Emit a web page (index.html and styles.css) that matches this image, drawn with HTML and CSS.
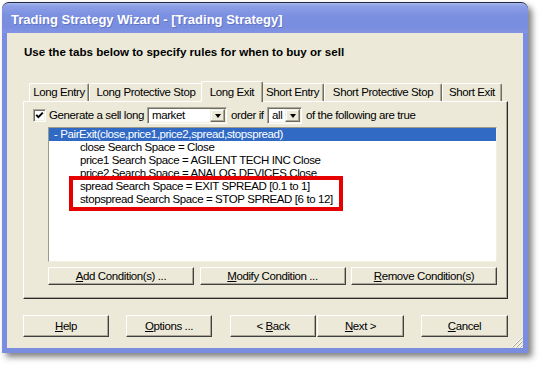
FILE: index.html
```html
<!DOCTYPE html>
<html>
<head>
<meta charset="utf-8">
<title>Trading Strategy Wizard</title>
<link rel="stylesheet" href="styles.css">
</head>
<body>
<div class="window">
  <div class="titlebar">Trading Strategy Wizard - [Trading Strategy]</div>
  <div class="client">
    <div class="intro">Use the tabs below to specify rules for when to buy or sell</div>
    <div class="tabstrip">
      <div class="tab w1">Long Entry</div>
      <div class="tab w2">Long Protective Stop</div>
      <div class="tab w3 active">Long Exit</div>
      <div class="tab w4">Short Entry</div>
      <div class="tab w5">Short Protective Stop</div>
      <div class="tab w6">Short Exit</div>
    </div>
    <div class="panel">
      <div class="rule">
        <span class="check"><svg width="9" height="9" viewBox="0 0 9 9"><polyline points="1.2,3.8 3.4,6.1 7.8,1.6" fill="none" stroke="#000" stroke-width="1.9"/></svg></span>
        <span class="lbl l1">Generate a sell long</span>
        <span class="combo c-market"><span class="val">market</span><span class="arrow"><span class="tri"></span></span></span>
        <span class="lbl l2">order if</span>
        <span class="combo c-all"><span class="val">all</span><span class="arrow"><span class="tri"></span></span></span>
        <span class="lbl l3">of the following are true</span>
      </div>
      <div class="list">
        <div class="row sel">- PairExit(close,price1,price2,spread,stopspread)</div>
        <div class="row child">close Search Space = Close</div>
        <div class="row child">price1 Search Space = AGILENT TECH INC Close</div>
        <div class="row child">price2 Search Space = ANALOG DEVICES Close</div>
        <div class="row child">spread Search Space = EXIT SPREAD [0.1 to 1]</div>
        <div class="row child">stopspread Search Space = STOP SPREAD [6 to 12]</div>
        <div class="mark"></div>
      </div>
      <div class="pbuttons">
        <div class="btn pb"><u>A</u>dd Condition(s) ...</div>
        <div class="btn pb"><u>M</u>odify Condition ...</div>
        <div class="btn pb"><u>R</u>emove Condition(s)</div>
      </div>
    </div>
    <div class="footer">
      <div class="btn fb b-help"><u>H</u>elp</div>
      <div class="btn fb b-opt"><u>O</u>ptions ...</div>
      <div class="btn fb b-back">&lt; <u>B</u>ack</div>
      <div class="btn fb b-next"><u>N</u>ext &gt;</div>
      <div class="btn fb b-cancel"><u>C</u>ancel</div>
    </div>
    <div class="grip"><svg width="12" height="12" viewBox="0 0 12 12">
      <g stroke-width="1">
        <line x1="11.5" y1="0.5" x2="0.5" y2="11.5" stroke="#fff"/>
        <line x1="11.5" y1="1.5" x2="1.5" y2="11.5" stroke="#ACA899"/>
        <line x1="11.5" y1="4.5" x2="4.5" y2="11.5" stroke="#fff"/>
        <line x1="11.5" y1="5.5" x2="5.5" y2="11.5" stroke="#ACA899"/>
        <line x1="11.5" y1="8.5" x2="8.5" y2="11.5" stroke="#fff"/>
        <line x1="11.5" y1="9.5" x2="9.5" y2="11.5" stroke="#ACA899"/>
      </g></svg></div>
  </div>
</div>
</body>
</html>
```
FILE: styles.css
```css
html, body {
  margin: 0;
  padding: 0;
  background: #fff;
}
body {
  width: 542px;
  height: 367px;
  overflow: hidden;
  font-family: "Liberation Sans", Arial, sans-serif;
  font-size: 11.5px;
  letter-spacing: -0.4px;
  color: #000;
}
.window {
  margin: 2px 0 0 2px;
  width: 526px;
  height: 351px;
  box-sizing: border-box;
  display: flex;
  flex-direction: column;
  background: #7A8DDE;
  border-top: 1px solid #23283c;
  border-radius: 7px 7px 0 0;
  box-shadow: 4px 4px 6px rgba(0, 0, 0, 0.5);
}
.titlebar {
  height: 30px;
  box-sizing: border-box;
  padding: 3px 0 0 9px;
  line-height: 27px;
  border-radius: 7px 7px 0 0;
  background: linear-gradient(to bottom, #A9B8EF 0, #8D9FE6 3px, #7C90E1 12px, #798DE0 24px, #8294E2 30px);
  color: #fff;
  font-weight: bold;
  font-size: 13px;
  letter-spacing: 0;
  text-shadow: 1px 1px 0 rgba(50, 60, 140, 0.35);
  white-space: nowrap;
}
.client {
  position: relative;
  flex: 1;
  margin: 0 5px 5px 5px;
  background: #ECE9D8;
  padding: 0 15px 0 16px;
  display: flex;
  flex-direction: column;
}
.intro {
  margin: 12px 0 0 1px;
  font-weight: bold;
  font-size: 11.6px;
  letter-spacing: 0;
  line-height: 14px;
  white-space: nowrap;
}
.tabstrip {
  margin-top: 22px;
  height: 20px;
  display: flex;
  align-items: flex-end;
  padding-left: 6px;
  position: relative;
  z-index: 2;
}
.tab {
  height: 18px;
  box-sizing: border-box;
  border-top: 1px solid #fff;
  border-left: 1px solid #fff;
  border-right: 1px solid #716F64;
  box-shadow: inset -1px 0 0 #ACA899;
  border-radius: 2px 2px 0 0;
  line-height: 16px;
  text-align: center;
  white-space: nowrap;
  background: #ECE9D8;
}
.w1 { width: 60px; }
.w2 { width: 114px; border-right-color: transparent; box-shadow: none; }
.w3 { width: 58px; }
.w4 { width: 63px; }
.w5 { width: 118px; }
.w6 { width: 60px; }
.tab.active {
  height: 21px;
  margin: 0 -2px -1px -2px;
  width: 62px;
  padding-top: 2px;
  position: relative;
  z-index: 3;
}
.panel {
  height: 198px;
  box-sizing: border-box;
  border: 1px solid;
  border-color: #fff #2a2a2a #2a2a2a #fff;
  box-shadow: inset -1px -1px 0 #ACA899;
  padding-top: 5px;
  display: flex;
  flex-direction: column;
}
.rule {
  display: flex;
  align-items: center;
  height: 17px;
  white-space: nowrap;
}
.check {
  width: 13px;
  height: 13px;
  box-sizing: border-box;
  margin-left: 9px;
  background: #fff;
  border: 1px solid;
  border-color: #ACA899 #fff #fff #ACA899;
  box-shadow: inset 1px 1px 0 #716F64, inset -1px -1px 0 #F1EFE2;
  display: flex;
  align-items: center;
  justify-content: center;
}
.check svg { display: block; }
.lbl { display: block; line-height: 17px; }
.l1 { width: 101px; padding-left: 3px; box-sizing: border-box; }
.l2 { width: 40px; padding-left: 4px; box-sizing: border-box; }
.l3 { padding-left: 4px; }
.combo {
  height: 17px;
  box-sizing: border-box;
  display: flex;
  background: #fff;
  border: 1px solid;
  border-color: #ACA899 #fff #fff #ACA899;
  box-shadow: inset 1px 1px 0 #716F64, inset -1px -1px 0 #F1EFE2;
  padding: 1px 1px 1px 1px;
}
.c-market { width: 80px; }
.c-all { width: 35px; }
.val {
  flex: 1;
  line-height: 13px;
  padding-left: 3px;
}
.arrow {
  width: 15px;
  height: 13px;
  box-sizing: border-box;
  background: #ECE9D8;
  border: 1px solid;
  border-color: #F1EFE2 #716F64 #716F64 #F1EFE2;
  box-shadow: inset -1px -1px 0 #ACA899, inset 1px 1px 0 #fff;
  display: flex;
  align-items: center;
  justify-content: center;
}
.tri {
  width: 0;
  height: 0;
  border-left: 3.5px solid transparent;
  border-right: 3.5px solid transparent;
  border-top: 4px solid #000;
}
.list {
  position: relative;
  margin: 3px 0 0 24px;
  width: 449px;
  height: 135px;
  box-sizing: border-box;
  background: #fff;
  border: 1px solid;
  border-color: #9D9A8C #F1EFE2 #F1EFE2 #9D9A8C;
  white-space: nowrap;
}
.row {
  height: 13px;
  line-height: 13px;
}
.row.sel {
  background: #316AC5;
  color: #fff;
  padding-left: 5px;
}
.row.child { padding-left: 31px; }
.mark {
  position: absolute;
  left: 20px;
  top: 48px;
  width: 274px;
  height: 35px;
  box-sizing: border-box;
  border: 4px solid #E60000;
}
.btn {
  box-sizing: border-box;
  background: #ECE9D8;
  border: 1px solid;
  border-color: #fff #404040 #404040 #fff;
  box-shadow: inset -1px -1px 0 #ACA899;
  text-align: center;
  white-space: nowrap;
}
.pbuttons {
  margin: 5px 0 0 24px;
  width: 449px;
  display: flex;
  justify-content: space-between;
}
.pb {
  width: 146px;
  height: 18px;
  line-height: 16px;
}
.footer {
  margin-top: 16px;
  display: flex;
}
.fb {
  height: 22px;
  line-height: 20px;
}
.b-help { width: 86px; }
.b-opt { width: 86px; margin-left: 17px; }
.b-back { width: 86px; margin-left: 18px; }
.b-next { width: 87px; margin-left: 1px; }
.b-cancel { width: 87px; margin-left: 17px; }
.grip {
  position: absolute;
  right: 0;
  bottom: 0;
  width: 12px;
  height: 12px;
}
.grip svg { display: block; }
```
